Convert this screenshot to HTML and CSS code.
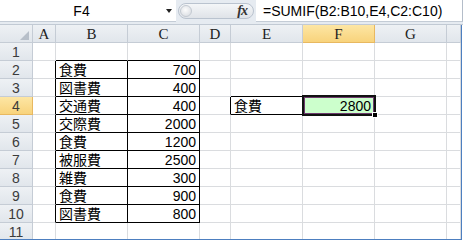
FILE: index.html
```html
<!DOCTYPE html>
<html lang="ja">
<head>
  <meta charset="UTF-8" />
  <meta name="viewport" content="width=device-width, initial-scale=1.0" />
  <title>SUMIF</title>
  <link rel="stylesheet" href="styles.css">
</head>
<body>
  <div class="formula-bar">
    <div class="name-box">
      <span class="name">F4</span>
      <span class="drop"></span>
    </div>
    <div class="splitter">
      <div class="pill">
        <span class="knob"></span>
        <span class="fx">fx</span>
      </div>
    </div>
    <div class="formula">=SUMIF(B2:B10,E4,C2:C10)</div>
  </div>

  <div class="sheet">
    <table class="grid">
      <colgroup>
        <col style="width:33px"><col style="width:23px"><col style="width:72px"><col style="width:72px">
        <col style="width:31px"><col style="width:72px"><col style="width:72px"><col style="width:72px"><col>
      </colgroup>
      <tr class="head">
        <th class="corner"><span class="tri"></span></th>
        <th>A</th><th>B</th><th>C</th><th>D</th><th>E</th><th class="sel">F</th><th>G</th><th></th>
      </tr>
      <tr><th class="row">1</th><td></td><td class="bt"></td><td class="bt"></td><td></td><td></td><td></td><td></td><td></td></tr>
      <tr><th class="row">2</th><td class="br"></td><td class="box">食費</td><td class="box num">700</td><td></td><td></td><td></td><td></td><td></td></tr>
      <tr><th class="row">3</th><td class="br"></td><td class="box">図書費</td><td class="box num">400</td><td></td><td class="bt"></td><td></td><td></td><td></td></tr>
      <tr><th class="row sel">4</th><td class="br"></td><td class="box">交通費</td><td class="box num">400</td><td class="br"></td><td class="box">食費</td><td class="hit num">2800</td><td></td><td></td></tr>
      <tr><th class="row">5</th><td class="br"></td><td class="box">交際費</td><td class="box num">2000</td><td></td><td></td><td></td><td></td><td></td></tr>
      <tr><th class="row">6</th><td class="br"></td><td class="box">食費</td><td class="box num">1200</td><td></td><td></td><td></td><td></td><td></td></tr>
      <tr><th class="row">7</th><td class="br"></td><td class="box">被服費</td><td class="box num">2500</td><td></td><td></td><td></td><td></td><td></td></tr>
      <tr><th class="row">8</th><td class="br"></td><td class="box">雑費</td><td class="box num">300</td><td></td><td></td><td></td><td></td><td></td></tr>
      <tr><th class="row">9</th><td class="br"></td><td class="box">食費</td><td class="box num">900</td><td></td><td></td><td></td><td></td><td></td></tr>
      <tr><th class="row">10</th><td class="br"></td><td class="box">図書費</td><td class="box num">800</td><td></td><td></td><td></td><td></td><td></td></tr>
      <tr><th class="row">11</th><td></td><td></td><td></td><td></td><td></td><td></td><td></td><td></td></tr>
    </table>
    <div class="selection"><span class="handle"></span></div>
  </div>
</body>
</html>
```

FILE: styles.css
```css
* {
  box-sizing: border-box;
  margin: 0;
  padding: 0;
}

body {
  width: 463px;
  height: 241px;
  background: #fff;
  font-family: 'Liberation Sans', 'Noto Sans CJK JP', sans-serif;
  font-size: 14px;
  color: #000;
  overflow: hidden;
}

/* formula bar */
.formula-bar {
  display: flex;
  height: 25px;
  background: #e6ebf1;
  border-bottom: 1px solid #c2cad4;
}

.name-box {
  display: flex;
  align-items: center;
  width: 176px;
  height: 22px;
  background: #fff;
  border-bottom: 1px solid #c4ccd6;
}

.name {
  flex: 1;
  text-align: center;
  padding-left: 2px;
}

.drop {
  width: 0;
  height: 0;
  margin: 1px 4px 0 5px;
  border-left: 3.5px solid transparent;
  border-right: 3.5px solid transparent;
  border-top: 4px solid #222;
}

.splitter {
  width: 80px;
  height: 22px;
  padding: 3px 2px 0 2px;
}

.pill {
  display: flex;
  align-items: center;
  justify-content: space-between;
  height: 16px;
  padding: 0 6px 0 1px;
  border: 1px solid #bac3cf;
  border-radius: 8px;
  background: linear-gradient(#f4f6f8, #dfe3e8);
}

.knob {
  width: 12px;
  height: 12px;
  border-radius: 50%;
  border: 1px solid #c3c9d1;
  background: radial-gradient(circle at 45% 40%, #fcfcfc, #d4d8de);
}

.fx {
  font-family: 'Liberation Serif', serif;
  font-style: italic;
  font-weight: bold;
  font-size: 14px;
  color: #333;
  letter-spacing: -1px;
}

.formula {
  flex: 1;
  height: 22px;
  padding: 3px 0 0 7px;
  line-height: 16px;
  background: #fff;
  border-bottom: 1px solid #c4ccd6;
  border-right: 1px solid #b4bdc9;
  white-space: nowrap;
}

/* sheet */
.sheet {
  position: relative;
  width: 462px;
  height: 215px;
  overflow: hidden;
  border-right: 1px solid #4d7fc0;
  border-bottom: 1px solid #4d7fc0;
}

.grid {
  width: 461px;
  table-layout: fixed;
  border-collapse: separate;
  border-spacing: 0;
}

.grid th,
.grid td {
  height: 18px;
  padding: 0 3px;
  border-right: 1px solid #dadcdf;
  border-bottom: 1px solid #dadcdf;
  white-space: nowrap;
  overflow: hidden;
  line-height: 16px;
  vertical-align: bottom;
}

.grid th {
  font-weight: normal;
  text-align: center;
  vertical-align: middle;
  color: #333;
  background: linear-gradient(#eef1f4, #e1e6ec);
  border-right-color: #c5ccd5;
  border-bottom-color: #c5ccd5;
}

.head th {
  font-family: 'Liberation Serif', serif;
  font-size: 15px;
  color: #222;
  padding-top: 1px;
}

.grid th.row {
  font-size: 14px;
  padding-top: 1px;
  color: #3b3b3b;
}

.grid th.sel {
  background: linear-gradient(#fde6a4, #f8d37c);
  border-bottom-color: #e8b860;
  border-right-color: #e8b860;
}

.corner {
  position: relative;
}

.tri {
  position: absolute;
  right: 3px;
  bottom: 2px;
  width: 9px;
  height: 9px;
  background: #b7bfc9;
  clip-path: polygon(100% 0, 100% 100%, 0 100%);
}

.grid td.bt {
  border-bottom-color: #000;
}

.grid td.br {
  border-right-color: #000;
}

.grid td.box {
  border-right-color: #000;
  border-bottom-color: #000;
}

.grid td.num {
  text-align: right;
}

.grid td.hit {
  background: #ccffcc;
}

/* active cell */
.selection {
  position: absolute;
  left: 302px;
  top: 70px;
  width: 74px;
  height: 21px;
  border: 2px solid #111;
  box-shadow: inset 0 0 0 1px #6e3a6e;
}

.handle {
  position: absolute;
  right: -4px;
  bottom: -4px;
  width: 6px;
  height: 6px;
  background: #000;
  border: 1px solid #fff;
}
```
